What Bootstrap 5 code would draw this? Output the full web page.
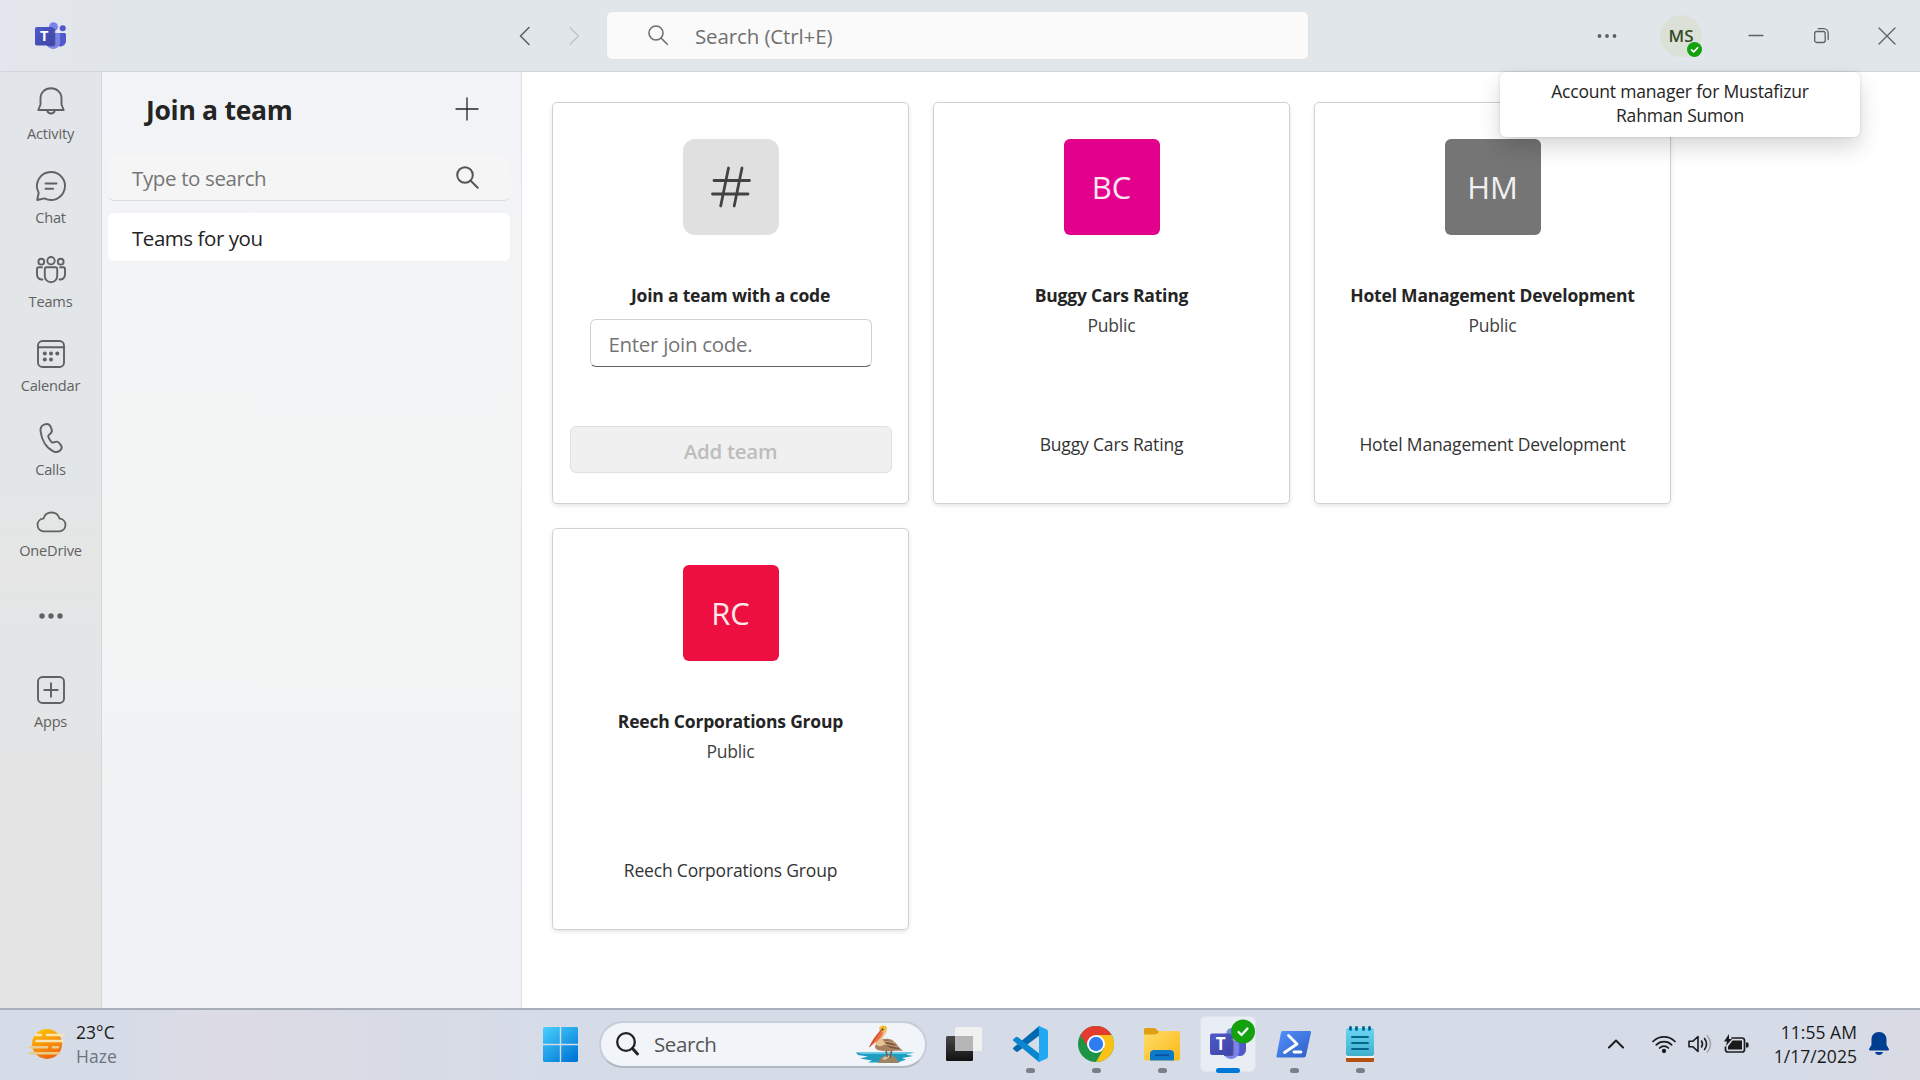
<!DOCTYPE html>
<html lang="en">
<head>
<meta charset="utf-8">
<meta name="viewport" content="width=device-width, initial-scale=1">
<title>Join a team | Microsoft Teams</title>
<link rel="stylesheet" href="https://cdn.jsdelivr.net/npm/bootstrap@5.3.0/dist/css/bootstrap.min.css">
<style>
  body { font-family: "Open Sans", "Noto Sans", sans-serif; color: #242424; overflow: hidden; font-size: 17.5px; letter-spacing: -.17px; }
  svg { display: block; flex: none; overflow: visible; }
  .ln { fill: none; stroke: currentColor; stroke-linecap: round; stroke-linejoin: round; }
  .ln-white { stroke: #fff; }

  /* title bar */
  .titlebar { height: 72px; background: linear-gradient(90deg, #e3e6ec 0, #e1e6ea 180px, #e1e6ea 100%); border-bottom: 1px solid #d1d6da; color: #616161; padding-left: 35px; padding-right: 24px; }
  .nav-arrows { margin-left: 446px; gap: 25px; width: 94px; }
  .top-search { width: 703px; height: 49px; background: #fafafa; border: 1px solid #e0e2e4; border-radius: 6px; padding: 2px 0 0 41px; gap: 27px; font-size: 20.5px; letter-spacing: -.12px; color: #707070; }
  .top-search svg { margin-top: -3px; }
  .avatar-me { width: 42px; height: 42px; background: #dce1d8; color: #374a25; font-size: 17px; font-weight: 600; letter-spacing: .1px; margin-left: 43px; }
  .presence { position: absolute; right: 0; bottom: 0; }
  .tip-box { position: absolute; top: 72px; left: 1500px; width: 360px; height: 65px; background: #fff; border-radius: 6px; line-height: 24px; padding: 7px 40px; box-shadow: 0 0 3px rgba(0,0,0,.14), 0 10px 22px rgba(0,0,0,.16); z-index: 5; letter-spacing: -.19px; }

  /* app rail */
  .workspace { height: 936px; }
  .rail { flex: none; width: 102px; background: linear-gradient(180deg, #e2e5ea 0, #e2e6e9 120px, #e2e6e8 380px, #e5e6e5 500px, #e2e6e8 580px, #e4e4e5 700px, #e4e4e5 100%); border-right: 1px solid #d6d8da; color: #616161; font-size: 14.6px; letter-spacing: -.2px; line-height: 20px; }
  .rail-item { height: 84px; padding-top: 14px; gap: 5px; }
  .rail-item.low { gap: 2px; }

  /* side panel */
  .side { flex: none; width: 420px; background: linear-gradient(180deg, #f1f3f7 0, #f2f4f5 240px, #f2f4f4 560px, #f0f2f4 700px, #f1f2f6 100%); border-right: 1px solid #dfe1e4; padding: 0 11px 0 6px; }
  .side h1 { font-size: 26.5px; font-weight: 700; letter-spacing: -.29px; padding-top: 4px; }
  .side-head { height: 82px; padding: 0 32px 8px 38px; }
  .side-field { height: 47px; background: #f5f5f5; border-bottom: 1px solid #dcdcdc; border-radius: 6px; padding: 0 31px 0 24px; color: #757575; font-size: 20.5px; letter-spacing: -.36px; }
  .side-field span, .side-pick span, .code-field span { padding-top: 2px; }
  .side-pick { height: 48px; background: #fff; border-radius: 6px; margin-top: 12px; padding-left: 24px; font-size: 20.5px; letter-spacing: -.45px; }

  /* team cards */
  .board { min-width: 0; padding: 30px; gap: 24px; }
  .team-card { flex: none; width: 357px; height: 402px; background: #fff; border: 1px solid #d1d1d1; border-radius: 5px; box-shadow: 0 2px 4px rgba(0,0,0,.1); padding-top: 36px; }
  .tile { width: 96px; height: 96px; border-radius: 6px; color: #fff; font-size: 31px; letter-spacing: 0; }
  .tile span { opacity: .9; }
  .tile-code { background: #e0e0e0; border-radius: 12px; color: #424242; }
  .team-name { margin-top: 48px; line-height: 24px; font-weight: 700; font-size: 17.5px; letter-spacing: -.2px; }
  .team-kind { margin-top: 6px; line-height: 24px; color: #424242; }
  .team-desc { margin-top: 95px; line-height: 24px; color: #333; }
  .code-field { width: 282px; height: 48px; margin-top: 12px; border: 1px solid #d1d1d1; border-bottom-color: #616161; border-radius: 6px; padding-left: 18px; font-size: 20.5px; letter-spacing: -.3px; color: #757575; }
  .btn-code { width: 322px; height: 47px; margin-top: 59px; padding: 3px 0 0; background: #f0f0f0 !important; border: 1px solid #e0e0e0 !important; border-radius: 6px; color: #bdbdbd !important; font-size: 20.5px; font-weight: 600; letter-spacing: -.3px; opacity: 1 !important; }

  /* taskbar */
  .taskbar { height: 72px; background: linear-gradient(90deg, #d4dce8 0, #d6dce7 130px, #dddbe4 230px, #d9dbe5 340px, #d5dce8 560px, #d5dce8 1780px, #d9dae3 100%); border-top: 2px solid #a9afb8; color: #1b1b1b; line-height: 24px; letter-spacing: .05px; padding: 0 31px 2px 28px; }
  .weather { width: 515px; gap: 10px; }
  .task-search { width: 328px; height: 47px; margin-left: 21px; margin-right: 9px; border-radius: 24px; background: #f1f4f8; border: 2px solid #c6cdd9; border-bottom-color: #b0b8c4; padding: 0 9px 0 15px; font-size: 20.5px; letter-spacing: -.4px; color: #555; }
  .task-label { margin-left: 14px; }
  .task-app { width: 56px; height: 56px; border-radius: 6px; margin-right: 10px; position: relative; }
  .task-app.current { background: #e9edf4; border: 1px solid #dfe4ec; }
  .run-dot { position: absolute; bottom: -1px; width: 9px; height: 5px; border-radius: 3px; background: #7b7f86; }
  .current .run-dot { width: 24px; background: #0078d7; bottom: -2px; }
  .tray { gap: 12px; }
  .chevron-up { margin-right: 16px; }
  .clock { width: 96px; }
</style>
<script src="https://cdn.jsdelivr.net/npm/bootstrap@5.3.0/dist/js/bootstrap.bundle.min.js"></script>
</head>
<body class="bg-white">

<!-- Shared Teams logo, 36 x 32 -->
<svg width="0" height="0" class="position-absolute">
  <defs>
    <linearGradient id="tsq" x1="0" y1="0" x2="1" y2="1"><stop offset="0" stop-color="#5059c9"/><stop offset="1" stop-color="#3d44a8"/></linearGradient>
    <symbol id="teams-logo" viewBox="0 0 36 32">
      <circle cx="32.2" cy="7" r="3.5" fill="#5059c9"/>
      <path d="M25 12.5h9.2c1 0 1.800.8 1.800 1.800v7.500a6.300 6.300 0 0 1-6.300 6.300c-2.500 0-4.700-1.600-4.700-4z" fill="#5059c9"/>
      <circle cx="21.500" cy="5.200" r="5.200" fill="#7b83eb"/>
      <path d="M13 12.500h14.700c.9 0 1.500.7 1.500 1.600v10a8.200 8.200 0 0 1-16.200 0z" fill="#7b83eb"/>
      <path d="M13 7h8.500a2 2 0 0 1 2 2v17a2 2 0 0 1-2 2H14z" fill="#3a3f7e" opacity=".75"/>
      <rect x="0" y="5.500" width="21.500" height="21.500" rx="2" fill="url(#tsq)"/>
      <text x="10.800" y="22" text-anchor="middle" fill="#fff" font-family="Open Sans, sans-serif" font-size="17" font-weight="700" letter-spacing="0">T</text>
    </symbol>
  </defs>
</svg>

<header class="titlebar d-flex align-items-center">
  <svg width="31" height="28"><use href="#teams-logo"/></svg>
  <div class="nav-arrows d-flex align-items-center ps-1">
    <svg class="ln" width="24" height="24" stroke-width="1.600"><path d="M13 3.500 4.500 12l8.500 8.500"/></svg>
    <svg class="ln" width="24" height="24" stroke-width="1.400" color="#c0c3c6"><path d="M5 3.500 13.500 12 5 20.500"/></svg>
  </div>
  <div class="top-search d-flex align-items-center">
    <svg class="ln" width="20" height="20" stroke-width="1.600"><circle cx="8" cy="8" r="7"/><path d="m13 13 6.300 6.300"/></svg>
    <span>Search (Ctrl+E)</span>
  </div>
  <div class="d-flex align-items-center ms-auto">
    <svg width="20" height="6" fill="currentColor"><circle cx="2.500" cy="3" r="1.900"/><circle cx="10" cy="3" r="1.900"/><circle cx="17.500" cy="3" r="1.900"/></svg>
    <div class="avatar-me rounded-circle position-relative d-flex align-items-center justify-content-center">MS
      <svg class="presence" width="15" height="15"><circle cx="7.500" cy="7.500" r="7.500" fill="#13a10e"/><path class="ln ln-white" d="m4.500 7.800 2.200 2.100 4-4.200" stroke-width="1.600"/></svg>
    </div>
    <svg class="ln ms-5" width="14" height="18" stroke-width="1.300"><path d="M-1 8.500h14"/></svg>
    <svg class="ln ms-5" width="18" height="18" stroke-width="1.300"><rect x="2.700" y="4.500" width="10.500" height="11" rx="2"/><path d="M6.200 1.700h5.500a4.500 4.500 0 0 1 4.500 4.500v6.300"/></svg>
    <svg class="ln" width="66" height="18" stroke-width="1.300"><path d="m49 1 16 16M65 1 49 17"/></svg>
  </div>
</header>

<div class="tip-box text-center" role="tooltip">Account manager for Mustafizur Rahman Sumon</div>

<div class="workspace d-flex">
  <nav class="rail d-flex flex-column">
    <div class="rail-item d-flex flex-column align-items-center">
      <svg class="ln" width="32" height="32" stroke-width="1.900"><path d="M16 2.300c6 0 10.500 4.300 10.500 10v6.200l2.200 5.500H3.300l2.200-5.500v-6.200c0-5.700 4.500-10 10.500-10zM12.200 24.500a3.900 3.900 0 0 0 7.600 0"/></svg>
      <span>Activity</span>
    </div>
    <div class="rail-item d-flex flex-column align-items-center">
      <svg class="ln" width="32" height="32" stroke-width="1.900"><path d="M16 2a14 14 0 1 1-6.500 26.400L2.200 30l1.500-7.300A14 14 0 0 1 16 2zM10.500 13.500h11M10.500 18.700h7.700"/></svg>
      <span>Chat</span>
    </div>
    <div class="rail-item d-flex flex-column align-items-center">
      <svg class="ln" width="32" height="32" stroke-width="1.900"><circle cx="16" cy="6.700" r="3.700"/><circle cx="6.300" cy="7.700" r="2.900"/><circle cx="25.700" cy="7.700" r="2.900"/><path d="M9.800 15c0-1 .8-1.800 1.800-1.800h8.800c1 0 1.800.8 1.800 1.800v7a6.200 6.200 0 0 1-12.400 0zM7 13.200H3.800c-1.100 0-1.800.8-1.800 1.800v5.200c0 3.500 2.200 5.600 5.500 5.300M25 13.200h3.200c1.100 0 1.800.8 1.800 1.800v5.200c0 3.500-2.200 5.600-5.500 5.300"/></svg>
      <span>Teams</span>
    </div>
    <div class="rail-item d-flex flex-column align-items-center">
      <svg class="ln" width="32" height="32" stroke-width="1.900"><rect x="3" y="3" width="26" height="26" rx="4.500"/><path d="M3 9.300h26"/><g fill="currentColor" stroke="none"><circle cx="9.800" cy="15.500" r="2"/><circle cx="16" cy="15.500" r="2"/><circle cx="22.300" cy="15.500" r="2"/><circle cx="9.800" cy="21.500" r="2"/><circle cx="16" cy="21.500" r="2"/></g></svg>
      <span>Calendar</span>
    </div>
    <div class="rail-item d-flex flex-column align-items-center">
      <svg class="ln" width="32" height="32" stroke-width="1.900"><path d="M9.700 2.400c3.200-1.100 5 .1 6 2.500l.9 2.300c.7 1.800.2 3.300-1.300 4.500l-1.600 1.400c-.5.500-.6 1-.4 1.700.6 2 1.800 3.900 3.400 5.400.4.400.9.500 1.500.3l2.200-.7c1.700-.5 3 0 4 1.400l1.600 2.200c1 1.500.9 3.300-.4 4.600-1.900 2-4.400 2.700-7.200 1.300C11.400 26 6.700 18.200 5.600 9.700c-.5-3.800.8-6.300 4.100-7.300z"/></svg>
      <span>Calls</span>
    </div>
    <div class="rail-item low d-flex flex-column align-items-center">
      <svg class="ln" width="32" height="32" stroke-width="1.800"><path d="M8.300 25.300a6.400 6.400 0 0 1-.3-12.700h.5a8.300 8.300 0 0 1 16 0h.5a6.400 6.400 0 0 1-.3 12.700z"/></svg>
      <span>OneDrive</span>
    </div>
    <div class="rail-item d-flex flex-column align-items-center pt-0 pb-1 justify-content-center">
      <svg width="24" height="6" fill="currentColor"><circle cx="3" cy="3" r="2.700"/><circle cx="12" cy="3" r="2.700"/><circle cx="21" cy="3" r="2.700"/></svg>
    </div>
    <div class="rail-item d-flex flex-column align-items-center">
      <svg class="ln" width="32" height="32" stroke-width="1.900"><rect x="3" y="3" width="26" height="26" rx="4.500"/><path d="M16 9.300v13.400M9.300 16h13.400"/></svg>
      <span>Apps</span>
    </div>
  </nav>

  <aside class="side">
    <div class="side-head d-flex align-items-center justify-content-between">
      <h1 class="m-0">Join a team</h1>
      <svg class="ln" width="22" height="22" stroke-width="1.300"><path d="M11 0v22M0 11h22"/></svg>
    </div>
    <div class="side-field d-flex align-items-center justify-content-between">
      <span>Type to search</span>
      <svg class="ln" width="23" height="23" stroke-width="2" color="#555"><circle cx="9" cy="9" r="7.800"/><path d="m14.700 14.700 7 7"/></svg>
    </div>
    <div class="side-pick d-flex align-items-center"><span>Teams for you</span></div>
  </aside>

  <main class="board d-flex flex-wrap align-content-start flex-grow-1">
    <div class="team-card d-flex flex-column align-items-center">
      <div class="tile tile-code d-flex align-items-center justify-content-center">
        <svg class="ln" width="40" height="42" stroke-width="2.800"><path d="M17.500 2 9.700 40M31 2l-7.800 38M3 14.500h35.500M1.500 28H37"/></svg>
      </div>
      <div class="team-name">Join a team with a code</div>
      <div class="code-field d-flex align-items-center"><span>Enter join code.</span></div>
      <button class="btn btn-code" disabled>Add team</button>
    </div>
    <div class="team-card d-flex flex-column align-items-center">
      <div class="tile d-flex align-items-center justify-content-center" style="background:#e3008c"><span>BC</span></div>
      <div class="team-name">Buggy Cars Rating</div>
      <div class="team-kind">Public</div>
      <div class="team-desc">Buggy Cars Rating</div>
    </div>
    <div class="team-card d-flex flex-column align-items-center">
      <div class="tile d-flex align-items-center justify-content-center" style="background:#757575"><span>HM</span></div>
      <div class="team-name">Hotel Management Development</div>
      <div class="team-kind">Public</div>
      <div class="team-desc">Hotel Management Development</div>
    </div>
    <div class="team-card d-flex flex-column align-items-center">
      <div class="tile d-flex align-items-center justify-content-center" style="background:#ed0f40"><span>RC</span></div>
      <div class="team-name">Reech Corporations Group</div>
      <div class="team-kind">Public</div>
      <div class="team-desc">Reech Corporations Group</div>
    </div>
  </main>
</div>

<footer class="taskbar d-flex align-items-center">
  <div class="weather d-flex align-items-center">
    <svg width="38" height="32">
      <defs><linearGradient id="sun" x1="0" y1="0" x2=".4" y2="1"><stop offset="0" stop-color="#ffcb00"/><stop offset="1" stop-color="#f36a0c"/></linearGradient></defs>
      <circle cx="19" cy="16" r="15" fill="url(#sun)"/>
      <g stroke-width="2.600" stroke-linecap="round"><path d="M8 7h5M19 7h17M8.500 13h27" stroke="#f7e6b4"/><path d="M2 19.300h17M25 19.300h5M2 25.300h29" stroke="#e9cb8b"/></g>
    </svg>
    <div><div>23°C</div><div class="text-secondary">Haze</div></div>
  </div>

  <svg width="35" height="35">
    <defs><linearGradient id="win" gradientUnits="userSpaceOnUse" x1="0" y1="0" x2="28" y2="35"><stop offset="0" stop-color="#4bd0ff"/><stop offset="1" stop-color="#0078d7"/></linearGradient></defs>
    <path fill="url(#win)" d="M1 0h15.800v16.800H0V1zM18.200 0H34l1 1v15.800H18.200zM0 18.200h16.800V35H1l-1-1zM18.200 18.200H35V34l-1 1H18.200z"/>
  </svg>

  <div class="task-search d-flex align-items-center">
    <svg class="ln" width="24" height="24" stroke-width="2.300" color="#222"><circle cx="10" cy="10" r="8.800"/><path d="m16.500 16.500 5 5.500" stroke-width="3"/></svg>
    <span class="task-label">Search</span>
    <!-- pelican standing on a rock -->
    <svg class="ms-auto" width="62" height="38">
      <path d="M2 27.500h58l-8 2 7 1.500-11 2 4 1.500-8 3H14l4-2-12-2 8-2-10-1.500z" fill="#1f9dc0"/>
      <path d="M2 27.500h58l-6 1.600H8z" fill="#62c9e4"/>
      <path d="M24 38c1-5 6-8 11-8s8 3 10 8z" fill="#9c8565"/><path d="M28 34c2-3 6-4 9-3l-6 4z" fill="#d6c3a0"/>
      <path d="m32 24 1 8M38 24l-2 9" stroke="#6b5a50" stroke-width="1.500"/>
      <path d="M21 22c1-6 7-9 14-8 6 1 8 7 14 12-9-1-13 1-20 0-4-.6-8-1.500-8-4z" fill="#a9805f"/>
      <path d="M30 15c6 0 10 4 16 9-7 0-15-1-16-9z" fill="#785742"/><path d="m30 19 14 3M30 16l12 2" stroke="#d4a981" stroke-width="1"/>
      <path d="M27 2c5-2 7 2 5 6-1.500 3-4 4-3 7 .5 2 3 3 3 3-3 4-9 4-10 1-1-4 5-7 5-10 0-2-2-3-2-5z" fill="#e8c294"/>
      <path d="M25 3c3-4 8-3 8 1l-4 3z" fill="#f5b72f"/>
      <path d="M27 5C23 9 17 16 15.500 22 21 18 28 13 29 8z" fill="#ec7042"/><path d="M27 5 15.500 22" stroke="#c13a31"/>
      <circle cx="28.500" cy="4.500" r=".9" fill="#222"/>
    </svg>
  </div>

  <div class="task-app d-flex align-items-center justify-content-center">
    <svg width="36" height="36"><defs><linearGradient id="tv" x1="0" y1="0" x2="0" y2="1"><stop offset="0" stop-color="#484848"/><stop offset="1" stop-color="#111"/></linearGradient></defs>
      <rect x="0" y="10" width="27" height="25" rx="1.500" fill="url(#tv)"/><rect x="9" y="1" width="27" height="24" rx="1.500" fill="#f0f0f0"/><path d="M9 10h18v15H10.500l-1.500-1z" fill="#b5b5b5"/></svg>
  </div>
  <div class="task-app d-flex align-items-center justify-content-center">
    <svg width="36" height="36"><path d="m1 22 25-21q1-1 2-1v9L6 25.500q-1 .8-2 0L1 23z" fill="#0069af"/><path d="M1 13.500 4 11q1-.6 2 .2L28 28v8q-1.300 0-2.300-1L1 14.500z" fill="#0a87cf"/><path d="m27 0 7.500 3.200Q36 4 36 5.500v25q0 1.500-1.500 2.300L27 36q-1 0-1-1l1-2V3l-1-2z" fill="#22a8f1"/></svg>
    <span class="run-dot"></span>
  </div>
  <div class="task-app d-flex align-items-center justify-content-center">
    <svg width="36" height="36"><circle cx="18" cy="18" r="18" fill="#1e9447"/><path d="M2.400 9A18 18 0 0 1 33.600 9L18 9.500a8.500 8.500 0 0 0-7.800 12.200z" fill="#e33b2e"/><path d="M18 9h15.600A18 18 0 0 1 18 36l7.800-13.500z" fill="#fbc116"/><circle cx="18" cy="18" r="9" fill="#fff"/><circle cx="18" cy="18" r="7.200" fill="#2f7cf0"/></svg>
    <span class="run-dot"></span>
  </div>
  <div class="task-app d-flex align-items-center justify-content-center">
    <svg width="36" height="36"><defs><linearGradient id="fo" x1="0" y1="0" x2="1" y2="1"><stop offset="0" stop-color="#ffdd6b"/><stop offset="1" stop-color="#fbb816"/></linearGradient></defs>
      <path d="M0 3.500Q0 2 1.500 2H11l3 3h1v8H0z" fill="#dea010"/><path d="M0 8.500h11q2 0 3.500-2L16 5h18.500Q36 5 36 6.500v26q0 2-2 2H2q-2 0-2-2z" fill="url(#fo)"/><path d="M6 34.500V28q0-4 4-4h16q4 0 4 4v6.500z" fill="#0f79c9"/><path d="M11 29.200h14" stroke="#07529a" stroke-width="1.800"/></svg>
    <span class="run-dot"></span>
  </div>
  <div class="task-app current d-flex align-items-center justify-content-center">
    <svg width="36" height="32"><use href="#teams-logo"/></svg>
    <svg width="24" height="24" class="position-absolute top-0 end-0 mt-1 me-0"><circle cx="12" cy="10.500" r="12" fill="#13a10e"/><path class="ln ln-white" stroke-width="2.300" d="m7.500 11 3 3 6-6.500"/></svg>
    <span class="run-dot"></span>
  </div>
  <div class="task-app d-flex align-items-center justify-content-center">
    <svg width="36" height="36"><defs><linearGradient id="ps" x1="0" y1="0" x2="1" y2="1"><stop offset="0" stop-color="#5391fe"/><stop offset="1" stop-color="#2f5ec4"/></linearGradient></defs>
      <path d="M6.500 5H34q1.500 0 1 1.500l-5 23q-.3 2-2 2H1.500Q0 31.500.5 30L5 6.500Q5.300 5 6.500 5z" fill="url(#ps)"/><g class="ln ln-white" stroke-width="2.800"><path d="m12.500 9.500 8.500 8.500-12.500 8.500M18 26h7"/></g></svg>
    <span class="run-dot"></span>
  </div>
  <div class="task-app d-flex align-items-center justify-content-center">
    <svg width="28" height="36"><defs><linearGradient id="np" x1="0" y1="0" x2="0" y2="1"><stop offset="0" stop-color="#6ad6f2"/><stop offset="1" stop-color="#3fb0cc"/></linearGradient></defs>
      <rect x="0" y="29" width="28" height="7" rx="1.500" fill="#b3520f"/><rect x="0" y="27" width="28" height="5" fill="#f1f1ee"/><rect x="0" y="2" width="28" height="28" rx="2" fill="url(#np)"/><g class="ln" color="#04658c"><path stroke-width="2.800" d="M4.500 1.500v2M10.500 1.500v2M17.500 1.500v2M23.500 1.500v2"/><path stroke-width="1.900" d="M6 11h16M6 17h16M6 23h16"/></g></svg>
    <span class="run-dot"></span>
  </div>

  <div class="tray d-flex align-items-center ms-auto">
    <svg class="ln chevron-up" width="16" height="10" stroke-width="2"><path d="m1 8.500 7-7 7 7"/></svg>
    <svg class="ln" width="24" height="18" stroke-width="1.700"><path d="M1 6.500a15.500 15.500 0 0 1 22 0M4.300 9.800a10.900 10.900 0 0 1 15.400 0M7.600 13a6.200 6.200 0 0 1 8.800 0"/><circle cx="12" cy="16" r="1.300" fill="currentColor"/></svg>
    <svg class="ln" width="24" height="18" stroke-width="1.600"><path d="M1 6.200h4L10 1.500v15l-5-4.700H1z"/><path d="M13.500 6q2 3 0 6M16.500 3.500q4 5.500 0 11"/><path d="M19.500 1q6 8 0 16" opacity=".28"/></svg>
    <svg width="25" height="20"><path class="ln" stroke-width="1.700" d="M8 4h10q2.500 0 2.500 2.500v9Q20.500 18 18 18H4q-2.500 0-2.500-2.500V13"/><path d="M22 8.500h1.500q1 0 1 1v3q0 1-1 1H22zM8.500 6.500H18v9H4v-3z" fill="currentColor"/><path d="M5 0 0 7.500h3L2 12l6-7H5z" fill="currentColor"/></svg>
    <div class="clock text-end"><div>11:55 AM</div><div>1/17/2025</div></div>
    <svg width="20" height="24" fill="#003e92"><path d="M10 0c4.700 0 7.500 3.300 7.500 7.500V13l2.300 3.800c.5.900 0 1.700-1 1.700H1.200c-1 0-1.500-.8-1-1.700L2.500 13V7.500C2.500 3.300 5.300 0 10 0zM6 20h8c-.5 2-2 3-4 3s-3.500-1-4-3z"/></svg>
  </div>
</footer>
</body>
</html>
